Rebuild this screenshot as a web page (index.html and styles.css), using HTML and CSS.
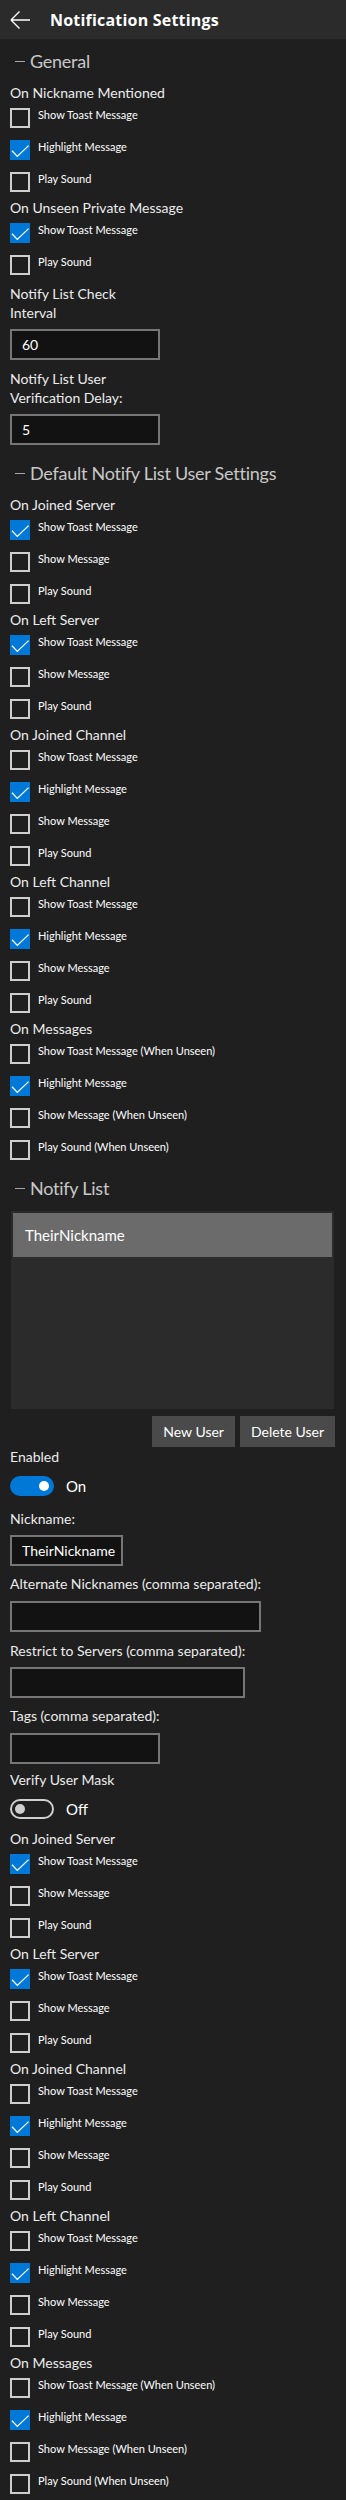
FILE: index.html
```
<!DOCTYPE html>
<html lang="en">
<head>
    <meta charset="UTF-8">
    <meta name="viewport" content="width=device-width, initial-scale=1.0">
    <title>Notification Settings</title>
    <link rel="stylesheet" href="styles.css">
</head>
<body>
    <header class="topbar">
        <svg class="back" width="20" height="20" viewBox="0 0 20 20"><path d="M1 10H20M1 10L9.5 1.5M1 10L9.5 18.5" fill="none" stroke="#fff" stroke-width="1.4"/></svg>
        <h1>Notification Settings</h1>
    </header>

    <main class="page">
        <h2 class="section-title"><span class="dash"></span>General</h2>

        <div class="group-label">On Nickname Mentioned</div>
        <label class="check"><span class="box"></span><span class="check-text">Show Toast Message</span></label>
        <label class="check"><span class="box on"><svg viewBox="0 0 20 20"><path d="M2 10.7L7.3 16.4L18.6 5.6"/></svg></span><span class="check-text">Highlight Message</span></label>
        <label class="check"><span class="box"></span><span class="check-text">Play Sound</span></label>

        <div class="group-label">On Unseen Private Message</div>
        <label class="check"><span class="box on"><svg viewBox="0 0 20 20"><path d="M2 10.7L7.3 16.4L18.6 5.6"/></svg></span><span class="check-text">Show Toast Message</span></label>
        <label class="check"><span class="box"></span><span class="check-text">Play Sound</span></label>

        <div class="field field-narrow mt-3">
            <label class="field-label">Notify List Check Interval</label>
            <input type="text" value="60">
        </div>
        <div class="field field-narrow mt-9">
            <label class="field-label">Notify List User Verification Delay:</label>
            <input type="text" value="5">
        </div>

        <h2 class="section-title mt-14"><span class="dash"></span>Default Notify List User Settings</h2>

        <div class="group-label">On Joined Server</div>
        <label class="check"><span class="box on"><svg viewBox="0 0 20 20"><path d="M2 10.7L7.3 16.4L18.6 5.6"/></svg></span><span class="check-text">Show Toast Message</span></label>
        <label class="check"><span class="box"></span><span class="check-text">Show Message</span></label>
        <label class="check"><span class="box"></span><span class="check-text">Play Sound</span></label>

        <div class="group-label">On Left Server</div>
        <label class="check"><span class="box on"><svg viewBox="0 0 20 20"><path d="M2 10.7L7.3 16.4L18.6 5.6"/></svg></span><span class="check-text">Show Toast Message</span></label>
        <label class="check"><span class="box"></span><span class="check-text">Show Message</span></label>
        <label class="check"><span class="box"></span><span class="check-text">Play Sound</span></label>

        <div class="group-label">On Joined Channel</div>
        <label class="check"><span class="box"></span><span class="check-text">Show Toast Message</span></label>
        <label class="check"><span class="box on"><svg viewBox="0 0 20 20"><path d="M2 10.7L7.3 16.4L18.6 5.6"/></svg></span><span class="check-text">Highlight Message</span></label>
        <label class="check"><span class="box"></span><span class="check-text">Show Message</span></label>
        <label class="check"><span class="box"></span><span class="check-text">Play Sound</span></label>

        <div class="group-label">On Left Channel</div>
        <label class="check"><span class="box"></span><span class="check-text">Show Toast Message</span></label>
        <label class="check"><span class="box on"><svg viewBox="0 0 20 20"><path d="M2 10.7L7.3 16.4L18.6 5.6"/></svg></span><span class="check-text">Highlight Message</span></label>
        <label class="check"><span class="box"></span><span class="check-text">Show Message</span></label>
        <label class="check"><span class="box"></span><span class="check-text">Play Sound</span></label>

        <div class="group-label">On Messages</div>
        <label class="check"><span class="box"></span><span class="check-text">Show Toast Message (When Unseen)</span></label>
        <label class="check"><span class="box on"><svg viewBox="0 0 20 20"><path d="M2 10.7L7.3 16.4L18.6 5.6"/></svg></span><span class="check-text">Highlight Message</span></label>
        <label class="check"><span class="box"></span><span class="check-text">Show Message (When Unseen)</span></label>
        <label class="check"><span class="box"></span><span class="check-text">Play Sound (When Unseen)</span></label>

        <h2 class="section-title"><span class="dash"></span>Notify List</h2>

        <div class="list-box">
            <div class="list-item selected">TheirNickname</div>
        </div>
        <div class="list-actions">
            <button>New User</button>
            <button>Delete User</button>
        </div>

        <div class="small-label">Enabled</div>
        <div class="toggle-row">
            <span class="switch on"><span class="knob"></span></span>
            <span>On</span>
        </div>

        <div class="field mt-13">
            <label class="field-label">Nickname:</label>
            <input type="text" class="nick-input" value="TheirNickname">
        </div>
        <div class="field mt-8">
            <label class="field-label lb-8">Alternate Nicknames (comma separated):</label>
            <input type="text">
        </div>
        <div class="field mt-9">
            <label class="field-label">Restrict to Servers (comma separated):</label>
            <input type="text">
        </div>
        <div class="field mt-8">
            <label class="field-label lb-8">Tags (comma separated):</label>
            <input type="text">
        </div>

        <div class="small-label mt-6">Verify User Mask</div>
        <div class="toggle-row">
            <span class="switch"><span class="knob"></span></span>
            <span>Off</span>
        </div>

        <div class="group-label mt-10">On Joined Server</div>
        <label class="check"><span class="box on"><svg viewBox="0 0 20 20"><path d="M2 10.7L7.3 16.4L18.6 5.6"/></svg></span><span class="check-text">Show Toast Message</span></label>
        <label class="check"><span class="box"></span><span class="check-text">Show Message</span></label>
        <label class="check"><span class="box"></span><span class="check-text">Play Sound</span></label>

        <div class="group-label">On Left Server</div>
        <label class="check"><span class="box on"><svg viewBox="0 0 20 20"><path d="M2 10.7L7.3 16.4L18.6 5.6"/></svg></span><span class="check-text">Show Toast Message</span></label>
        <label class="check"><span class="box"></span><span class="check-text">Show Message</span></label>
        <label class="check"><span class="box"></span><span class="check-text">Play Sound</span></label>

        <div class="group-label">On Joined Channel</div>
        <label class="check"><span class="box"></span><span class="check-text">Show Toast Message</span></label>
        <label class="check"><span class="box on"><svg viewBox="0 0 20 20"><path d="M2 10.7L7.3 16.4L18.6 5.6"/></svg></span><span class="check-text">Highlight Message</span></label>
        <label class="check"><span class="box"></span><span class="check-text">Show Message</span></label>
        <label class="check"><span class="box"></span><span class="check-text">Play Sound</span></label>

        <div class="group-label">On Left Channel</div>
        <label class="check"><span class="box"></span><span class="check-text">Show Toast Message</span></label>
        <label class="check"><span class="box on"><svg viewBox="0 0 20 20"><path d="M2 10.7L7.3 16.4L18.6 5.6"/></svg></span><span class="check-text">Highlight Message</span></label>
        <label class="check"><span class="box"></span><span class="check-text">Show Message</span></label>
        <label class="check"><span class="box"></span><span class="check-text">Play Sound</span></label>

        <div class="group-label">On Messages</div>
        <label class="check"><span class="box"></span><span class="check-text">Show Toast Message (When Unseen)</span></label>
        <label class="check"><span class="box on"><svg viewBox="0 0 20 20"><path d="M2 10.7L7.3 16.4L18.6 5.6"/></svg></span><span class="check-text">Highlight Message</span></label>
        <label class="check"><span class="box"></span><span class="check-text">Show Message (When Unseen)</span></label>
        <label class="check"><span class="box"></span><span class="check-text">Play Sound (When Unseen)</span></label>
    </main>
</body>
</html>
```
FILE: styles.css
```
:root {
    --bg: #1f1f1f;
    --bar-bg: #2b2b2b;
    --text: #ffffff;
    --label: #ececec;
    --heading: #c8c8c8;
    --accent: #0078d7;
    --box-border: #cfcfcf;
    --input-bg: #121212;
    --input-border: #767676;
}

body {
    margin: 0;
    background: var(--bg);
    color: var(--text);
    font-family: "Lato", "Noto Sans", sans-serif;
    font-size: 14px;
}

.topbar {
    height: 39px;
    background: var(--bar-bg);
    display: flex;
    align-items: center;
    padding-left: 10px;
}
.topbar .back {
    flex: none;
    display: block;
}
.topbar h1 {
    margin: 0 0 0 20px;
    font-family: "Open Sans", "Noto Sans", sans-serif;
    font-size: 16px;
    font-weight: 700;
    letter-spacing: 0.2px;
    line-height: 22px;
}

.page {
    padding: 0 10px;
}

.section-title {
    display: flex;
    align-items: center;
    margin: 8px 0;
    height: 28px;
    font-size: 18px;
    font-weight: 400;
    letter-spacing: -0.25px;
    line-height: 28px;
    color: var(--heading);
}
.dash {
    width: 10px;
    height: 1px;
    background: #a6a6a6;
    margin: 1px 5px 0 5px;
}

.group-label {
    font-size: 14px;
    line-height: 19px;
    color: var(--label);
}

.check {
    display: flex;
    align-items: flex-start;
    height: 32px;
}
.box {
    flex: none;
    width: 20px;
    height: 20px;
    margin-top: 6px;
    border: 2px solid var(--box-border);
    box-sizing: border-box;
}
.box.on {
    background: var(--accent);
    border: none;
}
.box svg {
    display: block;
    width: 20px;
    height: 20px;
}
.box path {
    fill: none;
    stroke: #fff;
    stroke-width: 1.3;
}
.check-text {
    margin: 5px 0 0 8px;
    font-size: 11px;
    line-height: 16px;
}

.field {
    display: flex;
    flex-direction: column;
    align-items: flex-start;
    width: fit-content;
}
.field-narrow {
    width: 150px;
}
.field-label {
    line-height: 19px;
    margin-bottom: 7px;
    color: var(--label);
}
.field input {
    width: 0;
    min-width: 100%;
    height: 31px;
    box-sizing: border-box;
    margin: 0;
    padding: 0 10px;
    background: var(--input-bg);
    border: 2px solid var(--input-border);
    border-radius: 0;
    color: var(--text);
    font-family: inherit;
    font-size: 14px;
    outline: none;
}
.field input.nick-input {
    width: 113px;
    padding: 0 2px 0 10px;
}

.list-box {
    height: 198px;
    box-sizing: border-box;
    margin: 9px 2px 0 1px;
    padding: 2px;
    background: #2b2b2b;
}
.list-item {
    height: 44px;
    line-height: 44px;
    padding-left: 12px;
    font-size: 15px;
}
.list-item.selected {
    background: #6b6b6b;
}

.list-actions {
    display: flex;
    justify-content: flex-end;
    gap: 5px;
    margin: 7px 1px 0 0;
}
.list-actions button {
    height: 31px;
    padding: 0 11px;
    border: none;
    border-radius: 0;
    background: #4a4a4a;
    color: var(--text);
    font-family: inherit;
    font-size: 14px;
}

.small-label {
    line-height: 19px;
    color: var(--label);
}

.toggle-row {
    display: flex;
    align-items: center;
    gap: 12px;
    margin-top: 10px;
    height: 20px;
    font-size: 15px;
}
.switch {
    width: 44px;
    height: 20px;
    box-sizing: border-box;
    border-radius: 10px;
    border: 2px solid var(--box-border);
    display: flex;
    align-items: center;
    justify-content: flex-start;
    padding: 0 3px;
}
.switch .knob {
    width: 10px;
    height: 10px;
    border-radius: 50%;
    background: var(--box-border);
}
.switch.on {
    background: var(--accent);
    border-color: var(--accent);
    justify-content: flex-end;
}
.switch.on .knob {
    background: #fff;
}

.mt-3 { margin-top: 3px; }
.mt-6 { margin-top: 6px; }
.mt-8 { margin-top: 8px; }
.mt-9 { margin-top: 9px; }
.mt-10 { margin-top: 10px; }
.mt-13 { margin-top: 13px; }
.mt-14 { margin-top: 14px; }
.lb-8 { margin-bottom: 8px; }
```
